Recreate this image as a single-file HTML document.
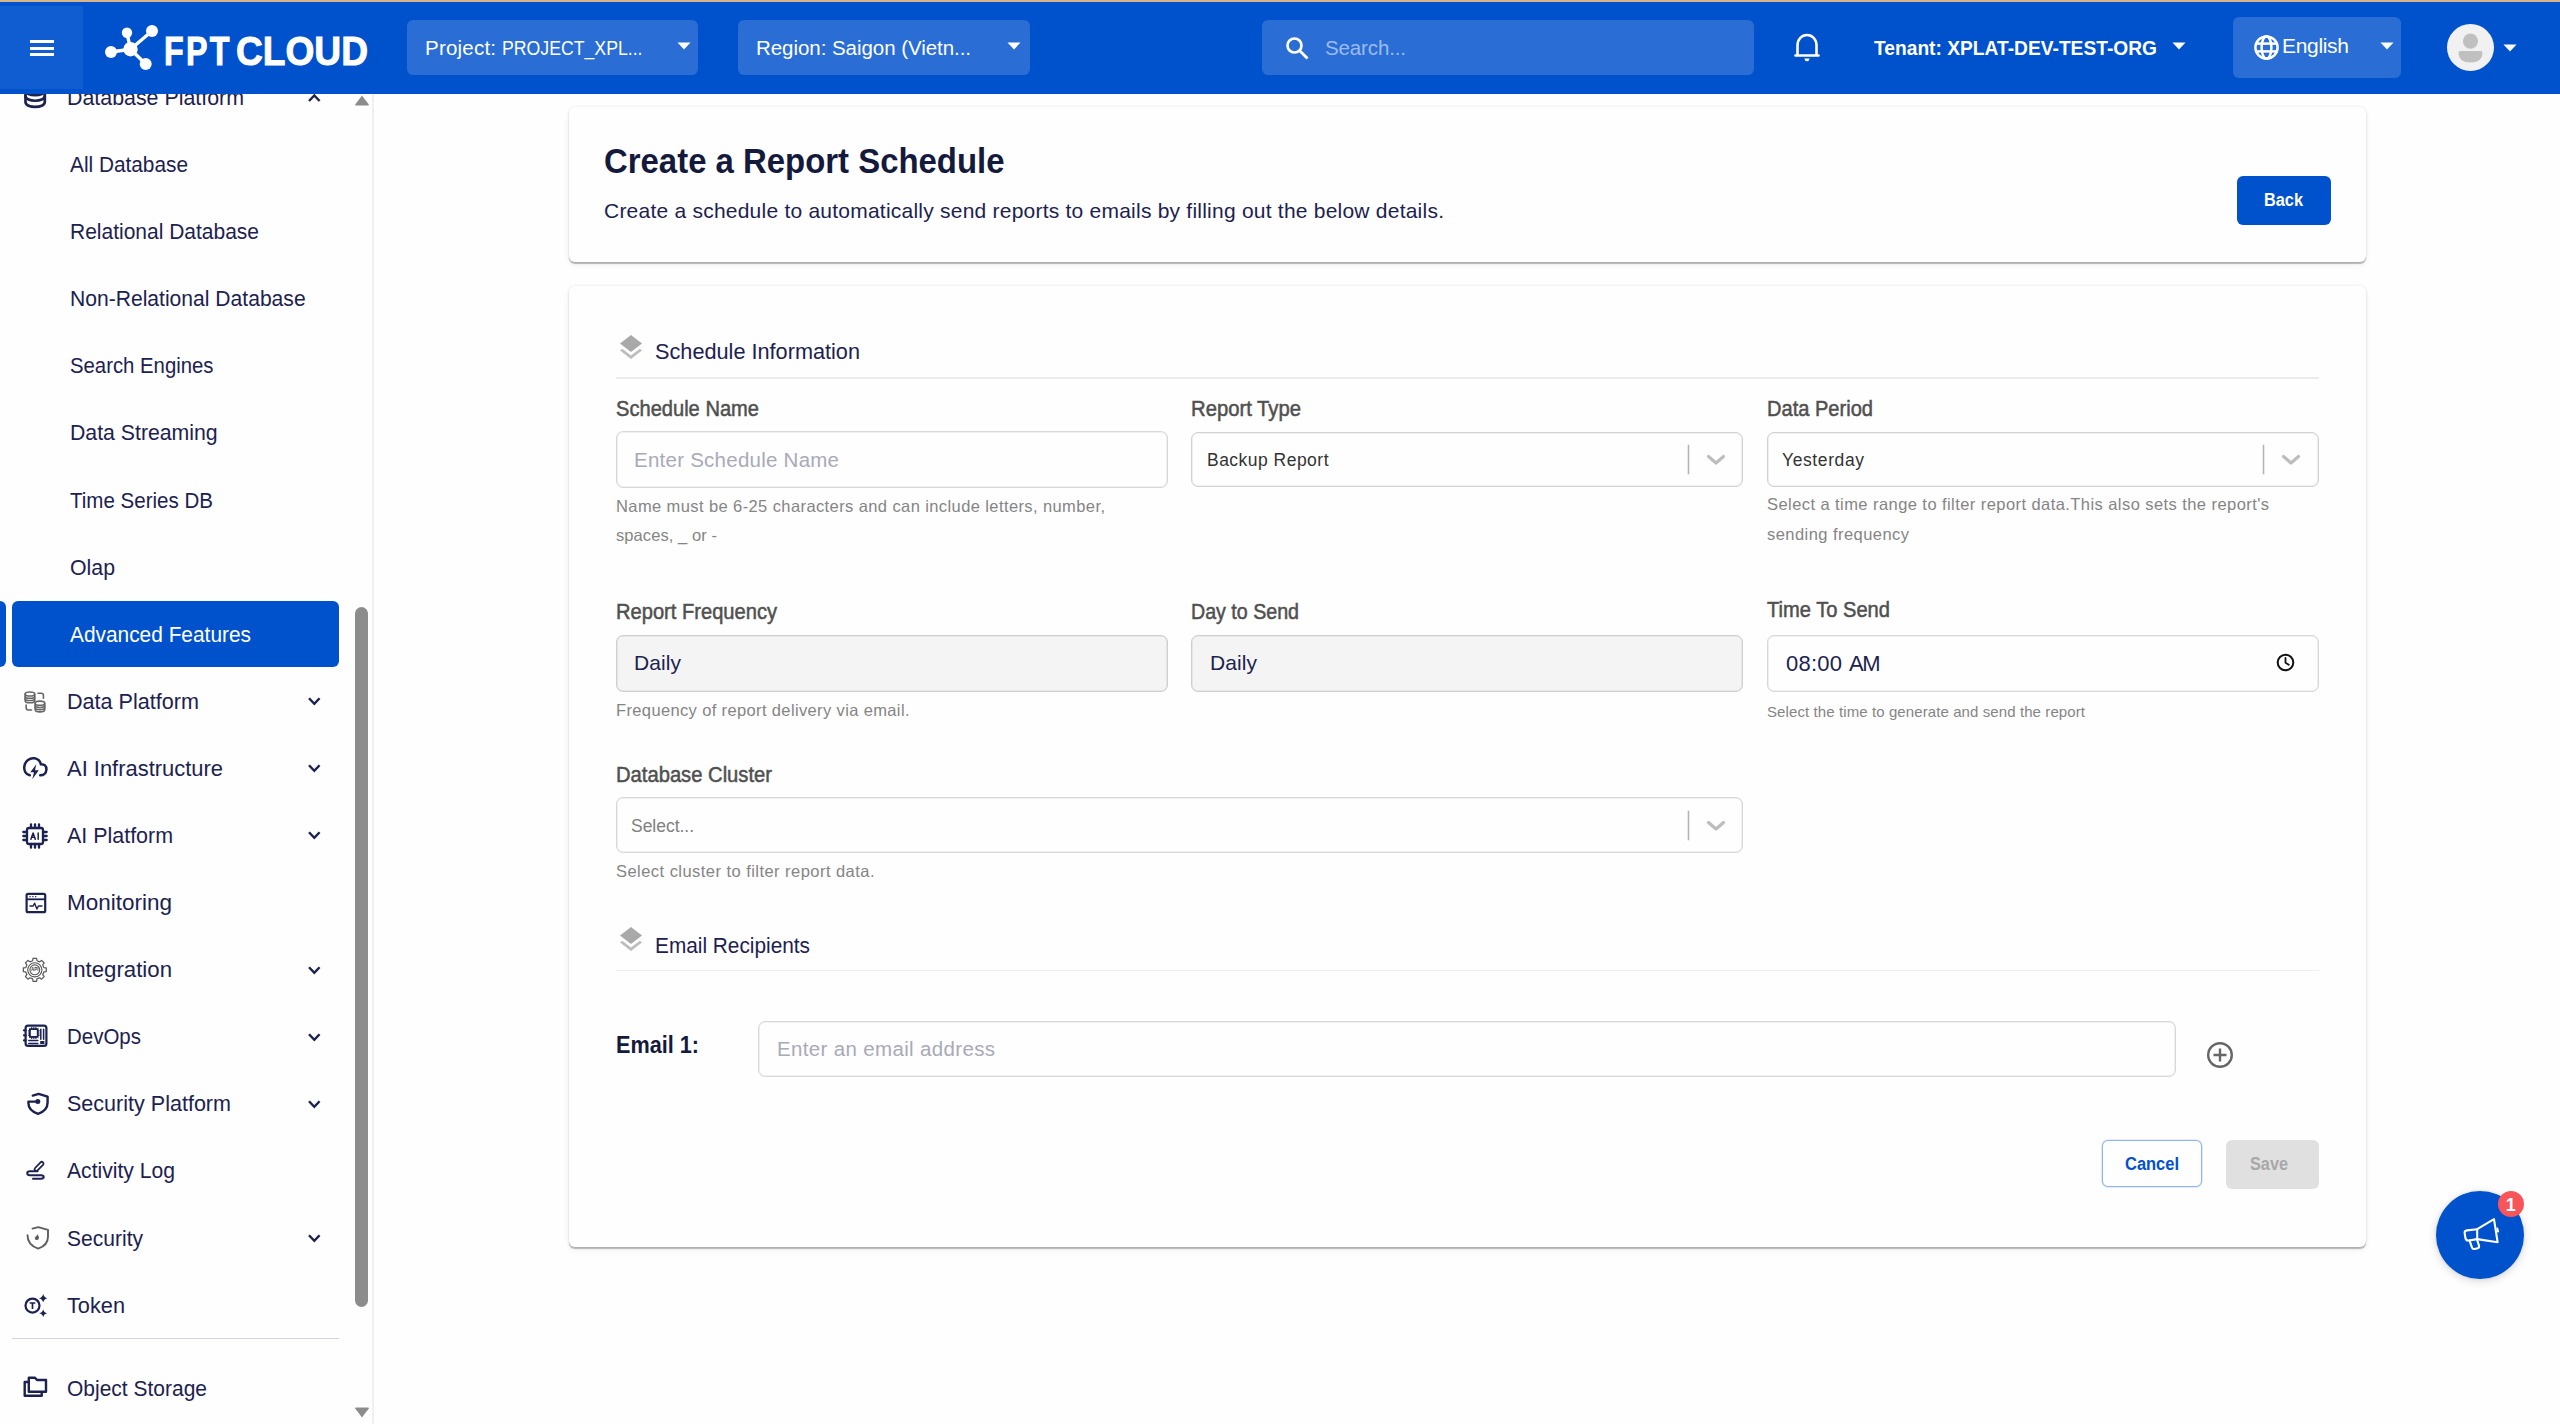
<!DOCTYPE html>
<html lang="en"><head><meta charset="utf-8"><title>FPT Cloud - Create a Report Schedule</title>
<style>
*{box-sizing:border-box;margin:0;padding:0}
html,body{width:2560px;height:1424px;overflow:hidden}
body{position:relative;background:#fefefe;font-family:"Liberation Sans",sans-serif;}
.t{position:absolute;white-space:pre;line-height:1;font-family:"Liberation Sans",sans-serif;}
.abs{position:absolute}
svg{position:absolute;overflow:visible}
/* header */
#topline{left:0;top:0;width:2560px;height:2px;background:#d9b48a}
#hdr{left:0;top:2px;width:2560px;height:92px;background:#0052cc}
#burger{left:0;top:6px;width:83px;height:83px;background:#0f5dd0}
.hbox{background:#296dd5;border-radius:6px}
/* sidebar */
#side{left:0;top:94px;width:374px;height:1330px;background:#fefefe;border-right:2px solid #f0f0f0}
#active{left:12px;top:601px;width:327px;height:66px;background:#0052cc;border-radius:6px}
#activebar{left:0;top:601px;width:6px;height:66px;background:#0052cc;border-radius:0 6px 6px 0}
#thumb{left:355px;top:607px;width:13px;height:700px;background:#8c8c8c;border-radius:7px}
#sdiv{left:12px;top:1338px;width:327px;height:1px;background:#d4d4e0}
/* cards */
.card{background:#fefefe;border-radius:6px;box-shadow:0 2px 1px rgba(0,0,0,.25),0 3px 6px rgba(0,0,0,.06),0 0 3px rgba(0,0,0,.09)}
.inp{background:#fefefe;border:1px solid #d8d8d8;border-radius:7px;box-shadow:inset 0 0 0 .6px #e4e4e4}
.inp.sel{border-color:#d2d2d2}
.inp.dis{background:#f4f4f4;border-color:#cfcfcf;box-shadow:inset 0 0 0 .6px #dcdcdc}
.sep{width:1px;background:#b4b4b4;box-shadow:0 0 0 .35px #c4c4c4}
.hr{height:2px;background:#ececec}
.hz{z-index:10}

</style></head>
<body>
<div class="abs" id="side"></div>
<div class="abs" id="active"></div>
<div class="abs" id="activebar"></div>
<div class="abs" id="thumb"></div>
<div class="abs" id="sdiv"></div>
<svg style="left:20.00px;top:80.00px" width="30.00" height="32.00" viewBox="20 80 30 32"><g fill="none" stroke="#1c2250" stroke-width="2.7" stroke-linecap="round"><path d="M25.5 85 V102 C25.5 108.5 44.8 108.5 44.8 102 V85"/><path d="M25.5 90.5 C25.5 96.7 44.8 96.7 44.8 90.5"/><path d="M25.5 96 C25.5 102.3 44.8 102.3 44.8 96"/></g></svg>
<svg style="left:21.20px;top:689.12px" width="27.60" height="25.76" viewBox="20 688 30 28"><g fill="none" stroke="#666" stroke-width="1.7" stroke-linecap="round"><ellipse cx="29.7" cy="693.5" rx="5.2" ry="2.2"/><path d="M24.5 693.5 V700.7 C24.5 703.7 34.9 703.7 34.9 700.7 V693.5"/><path d="M24.5 695.90 C24.5 698.90 34.9 698.90 34.9 695.90"/><path d="M24.5 698.30 C24.5 701.30 34.9 701.30 34.9 698.30"/><ellipse cx="40.6" cy="703.4000000000001" rx="5.2" ry="2.2"/><path d="M35.4 703.4000000000001 V710.6000000000001 C35.4 713.6000000000001 45.800000000000004 713.6000000000001 45.800000000000004 710.6000000000001 V703.4000000000001"/><path d="M35.4 705.80 C35.4 708.80 45.800000000000004 708.80 45.800000000000004 705.80"/><path d="M35.4 708.20 C35.4 711.20 45.800000000000004 711.20 45.800000000000004 708.20"/><path d="M38.5 692.6 H42 Q44.4 692.6 44.4 695 V698"/><path d="M25.6 705.5 V708.5 Q25.6 710.8 28 710.8 H31.5"/></g></svg>
<svg style="left:20.00px;top:754.00px" width="30.00" height="28.00" viewBox="20 754 30 28"><path d="M29.8 775.3 C25.6 774.4 23.9 770.6 24.3 766.6 C24.9 760.7 30 757.4 34.6 758.3 C38 759 40.2 761.4 40.9 764.2 C44.2 763.8 46.6 766.2 46.4 769.6 C46.2 773 43.6 775.4 40.2 775.3" fill="none" stroke="#1c2250" stroke-width="2.5" stroke-linecap="round"/><path d="M36.3 764.2 L30.3 772.3 H34 L32.3 779.3 L38.8 770.2 H35 Z" fill="#1c2250"/></svg>
<svg style="left:20.00px;top:821.00px" width="30.00" height="30.00" viewBox="20 821 30 30"><g fill="none" stroke="#1c2250" stroke-width="2.3" stroke-linecap="round"><rect x="27" y="828" width="16" height="16" rx="2"/><path d="M31 824.3 V828 M31 844 V847.7"/><path d="M35 824.3 V828 M35 844 V847.7"/><path d="M39 824.3 V828 M39 844 V847.7"/><path d="M23.3 832 H27 M43 832 H46.7"/><path d="M23.3 836 H27 M43 836 H46.7"/><path d="M23.3 840 H27 M43 840 H46.7"/></g><g fill="none" stroke="#1c2250" stroke-width="1.5" stroke-linejoin="round" stroke-linecap="round"><path d="M30.9 839.3 L33.1 833 L35.3 839.3 M31.7 837.3 H34.5"/><path d="M38.2 833 V839.3"/></g></svg>
<svg style="left:22.00px;top:890.00px" width="28.00" height="26.00" viewBox="22 890 28 26"><g fill="none" stroke="#1c2250"><rect x="26.6" y="893.8" width="18.6" height="18.4" rx="1.5" stroke-width="2.2"/><path d="M26.6 899.3 H45.2" stroke-width="1.8"/><path d="M29.5 896.6 H30.7 M32.3 896.6 H33.5 M35.1 896.6 H36.3" stroke-width="1.3"/><path d="M30 906 H33.2 L34.6 903.2 L36.9 909 L38.4 906 H42" stroke-width="1.4" stroke-linejoin="round" stroke-linecap="round"/></g></svg>
<svg style="left:20.00px;top:955.00px" width="30.00" height="30.00" viewBox="20 955 30 30"><g fill="none" stroke="#5a5a5a" stroke-linejoin="round"><path d="M46.26 967.99 L46.26 971.61 L43.84 971.97 L42.73 974.66 L44.18 976.62 L41.62 979.18 L39.66 977.73 L36.97 978.84 L36.61 981.26 L32.99 981.26 L32.63 978.84 L29.94 977.73 L27.98 979.18 L25.42 976.62 L26.87 974.66 L25.76 971.97 L23.34 971.61 L23.34 967.99 L25.76 967.63 L26.87 964.94 L25.42 962.98 L27.98 960.42 L29.94 961.87 L32.63 960.76 L32.99 958.34 L36.61 958.34 L36.97 960.76 L39.66 961.87 L41.62 960.42 L44.18 962.98 L42.73 964.94 L43.84 967.63 Z" stroke-width="1.25"/><circle cx="34.8" cy="969.8" r="7.1" stroke-width="1.1"/><circle cx="34.8" cy="969.8" r="4.9" stroke-width="1.1"/></g><text x="34.8" y="971.3" font-family="Liberation Sans,sans-serif" font-size="4.6" font-weight="700" text-anchor="middle" fill="#444">API</text></svg>
<svg style="left:20.00px;top:1022.00px" width="30.00" height="28.00" viewBox="20 1022 30 28"><g fill="none" stroke="#1c2250" stroke-linecap="round"><rect x="25.6" y="1025.7" width="20.8" height="20.2" rx="2.5" stroke-width="2.2"/><path d="M24 1030.3 H25.6 M24 1035.3 H25.6 M24 1040.3 H25.6" stroke-width="2.2"/><rect x="29.9" y="1029.1" width="7.8" height="7.8" stroke-width="1.8"/><g stroke-width="1.2"><path d="M31.7 1027.6 V1029 M31.7 1037 V1038.4"/><path d="M33.8 1027.6 V1029 M33.8 1037 V1038.4"/><path d="M35.9 1027.6 V1029 M35.9 1037 V1038.4"/><path d="M28.4 1030.8 H29.8 M37.8 1030.8 H39.2"/><path d="M28.4 1033 H29.8 M37.8 1033 H39.2"/><path d="M28.4 1035.2 H29.8 M37.8 1035.2 H39.2"/></g><path d="M40.8 1029.3 V1039.2 M43.6 1029.3 V1039.2" stroke-width="1.5"/><path d="M28.8 1040.6 H37.8 M28.8 1043.4 H37.8" stroke-width="1.5"/></g><rect x="40.2" y="1041" width="4.2" height="3" fill="#1c2250"/></svg>
<svg style="left:22.00px;top:1090.00px" width="30.00" height="28.00" viewBox="22 1090 30 28"><path d="M32.8 1095.6 L38.6 1093.9 L47.6 1096.6 V1102.5 C47.6 1108.3 44 1111.8 38 1113.8 C32 1111.8 28.4 1108.3 28.4 1103 V1101.6 H36" fill="none" stroke="#1c2250" stroke-width="2.4" stroke-linejoin="round" stroke-linecap="round"/><circle cx="37.8" cy="1101.6" r="2.5" fill="#1c2250"/></svg>
<svg style="left:22.00px;top:1158.00px" width="28.00" height="24.00" viewBox="22 1158 28 24"><g fill="none" stroke="#1c2250" stroke-linecap="round" stroke-linejoin="round"><path d="M37.5 1171.2 H30 C26.3 1171.2 26.3 1175.2 30 1175.2 H41 C44.6 1175.2 44.6 1178.7 41 1178.7 H33" stroke-width="2"/><path d="M36.3 1169.2 L41.8 1163.6" stroke-width="5.2"/></g><path d="M36.3 1169.2 L41.8 1163.6" stroke="#fff" stroke-width="1.7" stroke-linecap="round"/></svg>
<svg style="left:22.00px;top:1223.00px" width="30.00" height="30.00" viewBox="22 1223 30 30"><path d="M32.5 1228.6 L38.3 1227.2 L48 1229.8 V1236.5 C48 1242.6 44.2 1246.6 38.2 1248.6 C32.3 1246.6 27.5 1242 27.5 1235.2" fill="none" stroke="#5e5e5e" stroke-width="1.9" stroke-linejoin="round" stroke-linecap="round"/><path d="M37.2 1234.2 C38.8 1236 39.4 1237.6 38.7 1239 C38 1240.3 35.6 1240.3 35 1238.9 C34.5 1237.7 35.3 1236.7 36.2 1236.2 C36.7 1235.7 37 1235 37.2 1234.2 Z" fill="#5e5e5e"/></svg>
<svg style="left:22.00px;top:1292.00px" width="28.00" height="26.00" viewBox="22 1292 28 26"><g fill="none" stroke="#1c2250"><circle cx="32.5" cy="1305.6" r="7" stroke-width="2.2"/><path d="M29.7 1303 H35.3 M32.5 1303 V1309" stroke-width="1.7"/></g><g fill="#1c2250"><path d="M43.2 1293.9 Q43.91 1297.49 47.5 1298.2 Q43.91 1298.91 43.2 1302.5 Q42.49 1298.91 38.900000000000006 1298.2 Q42.49 1297.49 43.2 1293.9 Z"/><path d="M43.2 1309.2 Q43.86 1312.54 47.2 1313.2 Q43.86 1313.86 43.2 1317.2 Q42.54 1313.86 39.2 1313.2 Q42.54 1312.54 43.2 1309.2 Z"/></g></svg>
<svg style="left:20.00px;top:1373.00px" width="30.00" height="28.00" viewBox="20 1373 30 28"><g fill="none" stroke="#1c2250" stroke-width="2.4" stroke-linejoin="round"><path d="M28.8 1377.8 H35 L37 1380 H46 V1391.8 H28.8 Z"/><path d="M28.3 1382 H24.7 V1395.8 H41.7 V1392.4"/></g></svg>
<svg style="left:304.00px;top:89.50px" width="22.00" height="16.00" viewBox="304 89.5 22 16"><path d="M309 100.5 L314.3 94.9 L319.6 100.5" fill="none" stroke="#1c2250" stroke-width="2.4" stroke-linecap="butt" stroke-linejoin="miter"/></svg>
<svg style="left:304.00px;top:693.20px" width="22.00" height="16.00" viewBox="304 693.1999999999999 22 16"><path d="M309 698.4 L314.3 703.9999999999999 L319.6 698.4" fill="none" stroke="#1c2250" stroke-width="2.4" stroke-linecap="butt" stroke-linejoin="miter"/></svg>
<svg style="left:304.00px;top:760.30px" width="22.00" height="16.00" viewBox="304 760.3 22 16"><path d="M309 765.5 L314.3 771.0999999999999 L319.6 765.5" fill="none" stroke="#1c2250" stroke-width="2.4" stroke-linecap="butt" stroke-linejoin="miter"/></svg>
<svg style="left:304.00px;top:827.40px" width="22.00" height="16.00" viewBox="304 827.4 22 16"><path d="M309 832.6 L314.3 838.1999999999999 L319.6 832.6" fill="none" stroke="#1c2250" stroke-width="2.4" stroke-linecap="butt" stroke-linejoin="miter"/></svg>
<svg style="left:304.00px;top:961.60px" width="22.00" height="16.00" viewBox="304 961.5999999999999 22 16"><path d="M309 966.8 L314.3 972.3999999999999 L319.6 966.8" fill="none" stroke="#1c2250" stroke-width="2.4" stroke-linecap="butt" stroke-linejoin="miter"/></svg>
<svg style="left:304.00px;top:1028.70px" width="22.00" height="16.00" viewBox="304 1028.7 22 16"><path d="M309 1033.9 L314.3 1039.5 L319.6 1033.9" fill="none" stroke="#1c2250" stroke-width="2.4" stroke-linecap="butt" stroke-linejoin="miter"/></svg>
<svg style="left:304.00px;top:1095.80px" width="22.00" height="16.00" viewBox="304 1095.8 22 16"><path d="M309 1101.0 L314.3 1106.6 L319.6 1101.0" fill="none" stroke="#1c2250" stroke-width="2.4" stroke-linecap="butt" stroke-linejoin="miter"/></svg>
<svg style="left:304.00px;top:1230.00px" width="22.00" height="16.00" viewBox="304 1230.0 22 16"><path d="M309 1235.2 L314.3 1240.8 L319.6 1235.2" fill="none" stroke="#1c2250" stroke-width="2.4" stroke-linecap="butt" stroke-linejoin="miter"/></svg>
<!-- scrollbar arrows -->
<svg style="left:354px;top:94px" width="16" height="14" viewBox="0 0 16 14"><path d="M8 1.5 L14.8 10.5 Q15 11.5 14 11.5 L2 11.5 Q1 11.5 1.2 10.5 Z" fill="#8c8c8c"/></svg>
<svg style="left:354px;top:1405px" width="16" height="14" viewBox="0 0 16 14"><path d="M8 12.5 L14.8 3.5 Q15 2.5 14 2.5 L2 2.5 Q1 2.5 1.2 3.5 Z" fill="#8c8c8c"/></svg>

<!-- header -->
<div class="abs hz" id="hdr"></div>
<div class="abs hz" id="topline"></div>
<div class="abs hz" id="burger"></div>
<div class="abs hz" style="left:30px;top:40px;width:24px;height:3px;background:#fff"></div>
<div class="abs hz" style="left:30px;top:46.5px;width:24px;height:3px;background:#fff"></div>
<div class="abs hz" style="left:30px;top:53px;width:24px;height:3px;background:#fff"></div>
<!-- logo mark -->
<svg class="hz" style="left:100px;top:20px" width="64" height="56" viewBox="100 20 64 56">
  <g stroke="#fff" stroke-width="3.4" stroke-linecap="round">
    <line x1="130.5" y1="49.2" x2="127" y2="33"/>
    <line x1="130.5" y1="49.2" x2="152" y2="31"/>
    <line x1="130.5" y1="49.2" x2="111" y2="52"/>
    <line x1="130.5" y1="49.2" x2="145.7" y2="64"/>
  </g>
  <g fill="#fff">
    <circle cx="130.5" cy="49.2" r="7.2"/>
    <circle cx="127" cy="32.8" r="5.2"/>
    <circle cx="152" cy="30.9" r="6"/>
    <circle cx="111" cy="52" r="6"/>
    <circle cx="145.7" cy="64" r="6"/>
  </g>
</svg>
<div class="abs hz hbox" style="left:407px;top:20px;width:291px;height:55px"></div>
<div class="abs hz hbox" style="left:738px;top:20px;width:292px;height:55px"></div>
<div class="abs hz hbox" style="left:1262px;top:20px;width:492px;height:55px"></div>
<div class="abs hz hbox" style="left:2233px;top:17px;width:168px;height:61px"></div>
<!-- carets -->
<svg class="hz" style="left:677px;top:42px" width="14" height="8" viewBox="0 0 14 8"><path d="M0.5 0.5 H13.5 L7 7.5 Z" fill="#fff"/></svg>
<svg class="hz" style="left:1007px;top:42px" width="14" height="8" viewBox="0 0 14 8"><path d="M0.5 0.5 H13.5 L7 7.5 Z" fill="#fff"/></svg>
<svg class="hz" style="left:2172px;top:42px" width="14" height="8" viewBox="0 0 14 8"><path d="M0.5 0.5 H13.5 L7 7.5 Z" fill="#fff"/></svg>
<svg class="hz" style="left:2380px;top:42px" width="14" height="8" viewBox="0 0 14 8"><path d="M0.5 0.5 H13.5 L7 7.5 Z" fill="#fff"/></svg>
<svg class="hz" style="left:2502.6px;top:44px" width="14" height="8" viewBox="0 0 14 8"><path d="M0.5 0.5 H13.5 L7 7.5 Z" fill="#fff"/></svg>
<!-- search icon -->
<svg class="hz" style="left:1284px;top:35px" width="26" height="26" viewBox="0 0 26 26"><circle cx="10.5" cy="10.5" r="7" fill="none" stroke="#fff" stroke-width="2.7"/><line x1="16" y1="16" x2="23.5" y2="23.5" stroke="#fff" stroke-width="2.9" stroke-linecap="butt"/></svg>
<!-- bell -->
<svg class="hz" style="left:1792px;top:31px" width="30" height="32" viewBox="0 0 30 32"><path d="M3.5 24.5 H26.5 M5.5 24 V14.5 C5.5 8.5 9.5 4 15 4 C20.5 4 24.5 8.5 24.5 14.5 V24" fill="none" stroke="#fff" stroke-width="2.6" stroke-linecap="round" stroke-linejoin="round"/><path d="M12.3 27.5 H17.7 Q17 30.3 15 30.3 Q13 30.3 12.3 27.5Z" fill="#fff"/></svg>
<!-- globe -->
<svg class="hz" style="left:2253.5px;top:34.5px" width="25" height="25" viewBox="0 0 25 25"><g fill="none" stroke="#fff" stroke-width="2.5"><circle cx="12.5" cy="12.5" r="11.1"/><ellipse cx="12.5" cy="12.5" rx="4.9" ry="11.2"/><line x1="1.5" y1="8.6" x2="23.5" y2="8.6"/><line x1="1.5" y1="16.4" x2="23.5" y2="16.4"/></g></svg>
<!-- avatar -->
<svg class="hz" style="left:2447px;top:24px" width="47" height="47" viewBox="0 0 47 47"><circle cx="23.5" cy="23.5" r="23.5" fill="#f1f1f1"/><g fill="#bfc0bf"><circle cx="23.5" cy="17.1" r="7.6"/><path d="M11.6 28.6 Q11.6 27 13.2 27 H33.8 Q35.4 27 35.4 28.6 Q35.4 38.6 23.5 38.6 Q11.6 38.6 11.6 28.6 Z"/></g></svg>

<!-- cards -->
<div class="abs card" style="left:569px;top:107px;width:1797px;height:155px"></div>
<div class="abs card" style="left:569px;top:286px;width:1797px;height:961px"></div>
<div class="abs" style="left:2237px;top:176px;width:94px;height:49px;background:#0052cc;border-radius:6px"></div>

<!-- section icons -->
<svg style="left:619px;top:334px" width="24" height="26" viewBox="0 0 24 26"><path d="M12 1 L23 9.5 L12 18 L1 9.5 Z" fill="#a9a9a9"/><path d="M3.2 14.8 L12 21.6 L20.8 14.8 L23 16.5 L12 25 L1 16.5 Z" fill="#bdbdbd"/></svg>
<svg style="left:619px;top:926px" width="24" height="26" viewBox="0 0 24 26"><path d="M12 1 L23 9.5 L12 18 L1 9.5 Z" fill="#a9a9a9"/><path d="M3.2 14.8 L12 21.6 L20.8 14.8 L23 16.5 L12 25 L1 16.5 Z" fill="#bdbdbd"/></svg>
<div class="abs hr" style="left:616px;top:377px;width:1703px;background:#ebebeb"></div>
<div class="abs hr" style="left:616px;top:970px;width:1703px;height:1px;background:#ededed"></div>

<!-- inputs row 1 -->
<div class="abs inp" style="left:616px;top:431px;width:552px;height:57px"></div>
<div class="abs inp sel" style="left:1191px;top:432px;width:552px;height:55px"></div>
<div class="abs inp sel" style="left:1767px;top:432px;width:552px;height:55px"></div>
<div class="abs sep" style="left:1688px;top:445px;height:29px"></div>
<div class="abs sep" style="left:2263px;top:445px;height:29px"></div>
<svg style="left:1706px;top:454px" width="20" height="12" viewBox="0 0 20 12"><path d="M2.5 2.5 L10 9 L17.5 2.5" fill="none" stroke="#bdbdbd" stroke-width="3.2" stroke-linecap="round" stroke-linejoin="round"/></svg>
<svg style="left:2281px;top:454px" width="20" height="12" viewBox="0 0 20 12"><path d="M2.5 2.5 L10 9 L17.5 2.5" fill="none" stroke="#bdbdbd" stroke-width="3.2" stroke-linecap="round" stroke-linejoin="round"/></svg>
<!-- inputs row 2 -->
<div class="abs inp dis" style="left:616px;top:635px;width:552px;height:57px"></div>
<div class="abs inp dis" style="left:1191px;top:635px;width:552px;height:57px"></div>
<div class="abs inp" style="left:1767px;top:635px;width:552px;height:57px"></div>
<svg style="left:2276px;top:653px" width="19" height="19" viewBox="0 0 19 19"><circle cx="9.5" cy="9.5" r="7.8" fill="none" stroke="#111" stroke-width="2"/><path d="M9.5 5 V9.8 L12.8 11.8" fill="none" stroke="#111" stroke-width="1.8" stroke-linecap="round" stroke-linejoin="round"/></svg>
<!-- db cluster -->
<div class="abs inp" style="left:616px;top:797px;width:1127px;height:56px"></div>
<div class="abs sep" style="left:1688px;top:811px;height:29px"></div>
<svg style="left:1706px;top:820px" width="20" height="12" viewBox="0 0 20 12"><path d="M2.5 2.5 L10 9 L17.5 2.5" fill="none" stroke="#bdbdbd" stroke-width="3.2" stroke-linecap="round" stroke-linejoin="round"/></svg>
<!-- email -->
<div class="abs inp" style="left:758px;top:1021px;width:1418px;height:56px"></div>
<svg style="left:2206px;top:1040.5px" width="28" height="28" viewBox="0 0 28 28"><circle cx="14" cy="14" r="11.8" fill="none" stroke="#666" stroke-width="2.4"/><path d="M14 7.5 V20.5 M7.5 14 H20.5" stroke="#666" stroke-width="2.4" fill="none"/></svg>
<!-- buttons -->
<div class="abs" style="left:2102px;top:1140px;width:100px;height:47px;background:#fefefe;border:1px solid #8fb4ee;border-radius:6px;box-shadow:0 0 0 .6px rgba(143,180,238,.45)"></div>
<div class="abs" style="left:2226px;top:1140px;width:93px;height:49px;background:#e0e0e0;border-radius:6px"></div>
<!-- FAB -->
<div class="abs" style="left:2436px;top:1190.5px;width:88px;height:88px;border-radius:50%;background:#0052cc;box-shadow:0 2px 8px rgba(0,0,0,.16),0 0 3px rgba(0,0,0,.08)"></div>
<svg style="left:2456px;top:1210px" width="50" height="48" viewBox="2456 1210 50 48"><g fill="none" stroke="#fff" stroke-width="2.1" stroke-linejoin="round" stroke-linecap="round"><path d="M2477.2 1229.2 L2494 1219.2 L2497.6 1242.2 L2477.2 1239.1"/><path d="M2477.2 1229.2 L2467 1230.4 Q2464.3 1230.8 2464.7 1233.5 L2465.5 1238.3 Q2466 1240.9 2468.7 1240.5 L2477.2 1239.1 Z"/><path d="M2469.6 1240.6 L2471.9 1247.4 Q2472.6 1249.4 2474.7 1248.9 L2477.6 1248.2 Q2479.5 1247.6 2479 1245.7 L2477 1239.4"/><path d="M2497.3 1228.6 L2498 1231.4"/></g></svg>
<div class="abs" style="left:2498px;top:1191px;width:26px;height:26px;border-radius:50%;background:#f8555b"></div>

<!-- text layer -->
<span class="t" style="left:163.6px;top:30px;font-size:41.5px;font-weight:700;letter-spacing:3.000px;transform:scaleX(0.7762);transform-origin:0 0;z-index:11;color:#fff;-webkit-text-stroke:1px #fff;">FPT</span>
<span class="t" style="left:236.4px;top:30px;font-size:41.5px;font-weight:700;transform:scaleX(0.8946);transform-origin:0 0;z-index:11;color:#fff;-webkit-text-stroke:1px #fff;">CLOUD</span>
<span class="t" style="left:425px;top:38px;font-size:20.5px;letter-spacing:0.214px;z-index:11;color:#fff;">Project:</span>
<span class="t" style="left:502.2px;top:38px;font-size:20.5px;transform:scaleX(0.8624);transform-origin:0 0;z-index:11;color:#fff;">PROJECT_XPL...</span>
<span class="t" style="left:756px;top:38px;font-size:20.5px;letter-spacing:-0.050px;z-index:11;color:#fff;">Region: Saigon (Vietn...</span>
<span class="t" style="left:1325px;top:38px;font-size:20.5px;letter-spacing:-0.131px;z-index:11;color:rgba(255,255,255,.55);">Search...</span>
<span class="t" style="left:1874px;top:38px;font-size:20.5px;font-weight:700;transform:scaleX(0.9365);transform-origin:0 0;z-index:11;color:#fff;">Tenant: XPLAT-DEV-TEST-ORG</span>
<span class="t" style="left:2282px;top:35px;font-size:21px;letter-spacing:-0.315px;z-index:11;color:#fff;">English</span>
<span class="t" style="left:70px;top:154px;font-size:21.8px;transform:scaleX(0.9547);transform-origin:0 0;color:#1c2250;">All Database</span>
<span class="t" style="left:70px;top:221px;font-size:21.8px;transform:scaleX(0.9628);transform-origin:0 0;color:#1c2250;">Relational Database</span>
<span class="t" style="left:70px;top:288px;font-size:21.8px;transform:scaleX(0.9674);transform-origin:0 0;color:#1c2250;">Non-Relational Database</span>
<span class="t" style="left:70px;top:355px;font-size:21.8px;transform:scaleX(0.9325);transform-origin:0 0;color:#1c2250;">Search Engines</span>
<span class="t" style="left:70px;top:422px;font-size:21.8px;transform:scaleX(0.9752);transform-origin:0 0;color:#1c2250;">Data Streaming</span>
<span class="t" style="left:70px;top:490px;font-size:21.8px;transform:scaleX(0.9420);transform-origin:0 0;color:#1c2250;">Time Series DB</span>
<span class="t" style="left:70px;top:557px;font-size:21.8px;transform:scaleX(0.9773);transform-origin:0 0;color:#1c2250;">Olap</span>
<span class="t" style="left:70px;top:624px;font-size:21.8px;transform:scaleX(0.9575);transform-origin:0 0;color:#fff;">Advanced Features</span>
<span class="t" style="left:67px;top:87px;font-size:21.8px;transform:scaleX(0.9804);transform-origin:0 0;color:#1c2250;">Database Platform</span>
<span class="t" style="left:67px;top:691px;font-size:21.8px;transform:scaleX(0.9905);transform-origin:0 0;color:#1c2250;">Data Platform</span>
<span class="t" style="left:67px;top:758px;font-size:21.8px;transform:scaleX(1.0060);transform-origin:0 0;color:#1c2250;">AI Infrastructure</span>
<span class="t" style="left:67px;top:825px;font-size:21.8px;transform:scaleX(0.9832);transform-origin:0 0;color:#1c2250;">AI Platform</span>
<span class="t" style="left:67px;top:892px;font-size:21.8px;transform:scaleX(1.0316);transform-origin:0 0;color:#1c2250;">Monitoring</span>
<span class="t" style="left:67px;top:959px;font-size:21.8px;transform:scaleX(1.0193);transform-origin:0 0;color:#1c2250;">Integration</span>
<span class="t" style="left:67px;top:1026px;font-size:21.8px;transform:scaleX(0.9397);transform-origin:0 0;color:#1c2250;">DevOps</span>
<span class="t" style="left:67px;top:1093px;font-size:21.8px;transform:scaleX(0.9882);transform-origin:0 0;color:#1c2250;">Security Platform</span>
<span class="t" style="left:67px;top:1160px;font-size:21.8px;transform:scaleX(0.9689);transform-origin:0 0;color:#1c2250;">Activity Log</span>
<span class="t" style="left:67px;top:1228px;font-size:21.8px;transform:scaleX(0.9651);transform-origin:0 0;color:#1c2250;">Security</span>
<span class="t" style="left:67px;top:1295px;font-size:21.8px;transform:scaleX(0.9970);transform-origin:0 0;color:#1c2250;">Token</span>
<span class="t" style="left:67px;top:1378px;font-size:21.8px;transform:scaleX(0.9628);transform-origin:0 0;color:#1c2250;">Object Storage</span>
<span class="t" style="left:604.3px;top:144px;font-size:34.4px;font-weight:700;transform:scaleX(0.9568);transform-origin:0 0;color:#141a3c;">Create a Report Schedule</span>
<span class="t" style="left:604px;top:200px;font-size:21px;letter-spacing:0.228px;color:#1c2250;">Create a schedule to automatically send reports to emails by filling out the below details.</span>
<span class="t" style="left:2264px;top:192px;font-size:17.5px;font-weight:700;transform:scaleX(0.9320);transform-origin:0 0;color:#fff;">Back</span>
<span class="t" style="left:655px;top:342px;font-size:21.5px;transform:scaleX(1.0089);transform-origin:0 0;color:#1c2250;">Schedule Information</span>
<span class="t" style="left:616px;top:399px;font-size:21.3px;transform:scaleX(0.9436);transform-origin:0 0;color:#505050;-webkit-text-stroke:0.5px #505050;">Schedule Name</span>
<span class="t" style="left:1191px;top:399px;font-size:21.3px;transform:scaleX(0.9514);transform-origin:0 0;color:#505050;-webkit-text-stroke:0.5px #505050;">Report Type</span>
<span class="t" style="left:1767px;top:399px;font-size:21.3px;transform:scaleX(0.9425);transform-origin:0 0;color:#505050;-webkit-text-stroke:0.5px #505050;">Data Period</span>
<span class="t" style="left:634px;top:450px;font-size:20.5px;letter-spacing:0.247px;color:#a9a9b8;">Enter Schedule Name</span>
<span class="t" style="left:1207px;top:452px;font-size:17.5px;letter-spacing:0.478px;color:#333;">Backup Report</span>
<span class="t" style="left:1782px;top:452px;font-size:17.5px;letter-spacing:0.602px;color:#333;">Yesterday</span>
<span class="t" style="left:616px;top:498px;font-size:16.5px;letter-spacing:0.400px;color:#858585;">Name must be 6-25 characters and can include letters, number,</span>
<span class="t" style="left:616px;top:527px;font-size:16.5px;letter-spacing:0.079px;color:#858585;">spaces, _ or -</span>
<span class="t" style="left:1767px;top:496px;font-size:16.5px;letter-spacing:0.431px;color:#858585;">Select a time range to filter report data.This also sets the report&#x27;s</span>
<span class="t" style="left:1767px;top:526px;font-size:16.5px;letter-spacing:0.446px;color:#858585;">sending frequency</span>
<span class="t" style="left:616px;top:602px;font-size:21.3px;transform:scaleX(0.9445);transform-origin:0 0;color:#505050;-webkit-text-stroke:0.5px #505050;">Report Frequency</span>
<span class="t" style="left:1191px;top:602px;font-size:21.3px;transform:scaleX(0.9214);transform-origin:0 0;color:#505050;-webkit-text-stroke:0.5px #505050;">Day to Send</span>
<span class="t" style="left:1767px;top:600px;font-size:21.3px;transform:scaleX(0.9446);transform-origin:0 0;color:#505050;-webkit-text-stroke:0.5px #505050;">Time To Send</span>
<span class="t" style="left:634px;top:652px;font-size:21px;letter-spacing:0.078px;color:#1c2250;">Daily</span>
<span class="t" style="left:1210px;top:652px;font-size:21px;letter-spacing:0.078px;color:#1c2250;">Daily</span>
<span class="t" style="left:1786px;top:653px;font-size:22px;letter-spacing:0.234px;color:#1c2250;">08:00</span>
<span class="t" style="left:1849px;top:653px;font-size:22px;letter-spacing:-1.500px;color:#1c2250;">AM</span>
<span class="t" style="left:616px;top:702px;font-size:16.5px;letter-spacing:0.363px;color:#858585;">Frequency of report delivery via email.</span>
<span class="t" style="left:1767px;top:704px;font-size:15px;letter-spacing:0.097px;color:#858585;">Select the time to generate and send the report</span>
<span class="t" style="left:616px;top:765px;font-size:21.3px;transform:scaleX(0.9481);transform-origin:0 0;color:#505050;-webkit-text-stroke:0.5px #505050;">Database Cluster</span>
<span class="t" style="left:631px;top:818px;font-size:17.5px;letter-spacing:-0.029px;color:#808080;">Select...</span>
<span class="t" style="left:616px;top:863px;font-size:16.5px;letter-spacing:0.455px;color:#858585;">Select cluster to filter report data.</span>
<span class="t" style="left:655px;top:936px;font-size:21.5px;transform:scaleX(0.9680);transform-origin:0 0;color:#1c2250;">Email Recipients</span>
<span class="t" style="left:616px;top:1034px;font-size:23px;font-weight:700;transform:scaleX(0.9408);transform-origin:0 0;color:#141a3c;">Email 1:</span>
<span class="t" style="left:777px;top:1039px;font-size:20.5px;letter-spacing:0.342px;color:#a9a9b8;">Enter an email address</span>
<span class="t" style="left:2125px;top:1156px;font-size:17.5px;font-weight:700;transform:scaleX(0.9409);transform-origin:0 0;color:#0050d0;">Cancel</span>
<span class="t" style="left:2250px;top:1156px;font-size:17.5px;font-weight:700;transform:scaleX(0.9297);transform-origin:0 0;color:#a8a8a8;">Save</span>
<span class="t" style="left:2505.7px;top:1196px;font-size:18px;font-weight:700;color:#fff;">1</span>
</body></html>
